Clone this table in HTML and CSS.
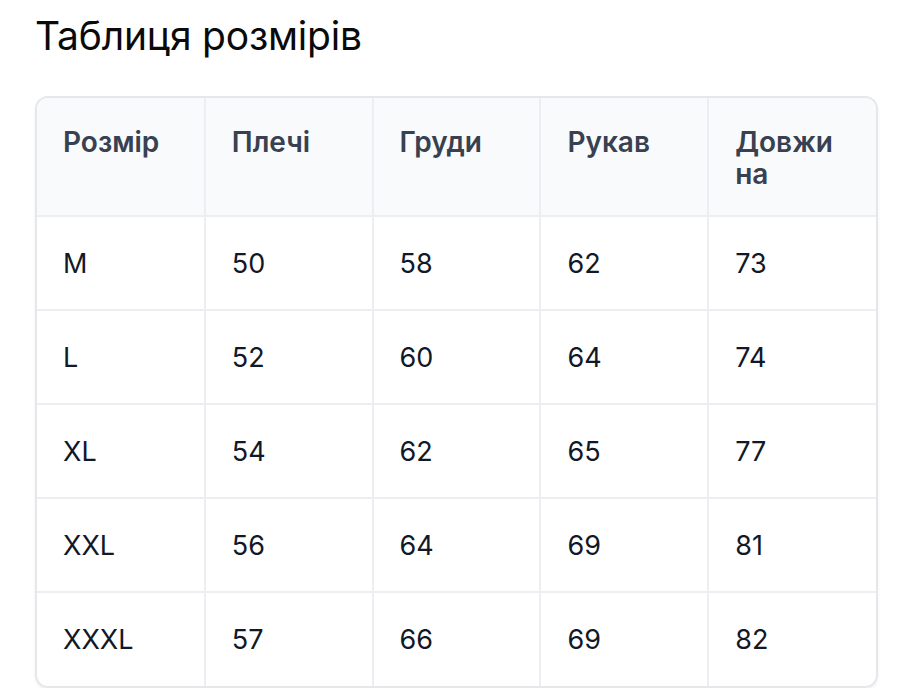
FILE: index.html
```html
<!DOCTYPE html>
<html lang="uk">
<head>
<meta charset="utf-8">
<link rel="stylesheet" href="styles.css">
</head>
<body>
<h1 class="title">Таблиця розмірів</h1>
<div class="table-wrap">
<table class="size-table">
<thead>
<tr><th>Розмір</th><th>Плечі</th><th>Груди</th><th>Рукав</th><th>Довжи на</th></tr>
</thead>
<tbody>
<tr><td>M</td><td>50</td><td>58</td><td>62</td><td>73</td></tr>
<tr><td>L</td><td>52</td><td>60</td><td>64</td><td>74</td></tr>
<tr><td>XL</td><td>54</td><td>62</td><td>65</td><td>77</td></tr>
<tr><td>XXL</td><td>56</td><td>64</td><td>69</td><td>81</td></tr>
<tr><td>XXXL</td><td>57</td><td>66</td><td>69</td><td>82</td></tr>
</tbody>
</table>
</div>
</body>
</html>
```
FILE: styles.css
```css
html, body {
  margin: 0;
  padding: 0;
  background: #ffffff;
}
body {
  font-family: Inter, "Noto Sans", sans-serif;
  padding: 0 36px 0 35px;
}
.title {
  margin: 12px 0 36px 0;
  font-size: 39px;
  line-height: 48px;
  font-weight: 400;
  color: #0a0a0a;
  letter-spacing: -0.2px;
}
.table-wrap {
  border: 2px solid #e5e7eb;
  border-radius: 13px;
  overflow: hidden;
  box-shadow: 0 2px 3px rgba(0, 0, 0, 0.06);
}
.size-table {
  width: 100%;
  border-collapse: collapse;
  table-layout: fixed;
}
.size-table th,
.size-table td {
  text-align: left;
  border-left: 2px solid #eceef1;
  padding: 0 26px;
}
.size-table th:first-child,
.size-table td:first-child {
  border-left: none;
}
.size-table th {
  background: #f9fafb;
  color: #374151;
  font-size: 28px;
  line-height: 32px;
  font-weight: 600;
  vertical-align: top;
  padding-top: 28px;
  padding-bottom: 25px;
  height: 64px;
}
.size-table tbody tr {
  height: 94px;
}
.size-table td {
  border-top: 2px solid #eceef1;
  font-size: 27px;
  line-height: 32px;
  color: #111827;
  vertical-align: middle;
  padding-top: 1px;
}
```
